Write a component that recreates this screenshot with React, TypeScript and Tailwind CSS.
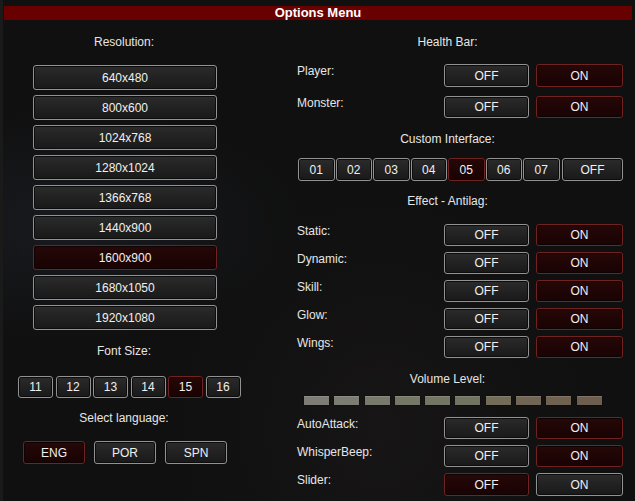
const resolutions = [
  "640x480",
  "800x600",
  "1024x768",
  "1280x1024",
  "1366x768",
  "1440x900",
  "1600x900",
  "1680x1050",
  "1920x1080",
];

const fontSizes = ["11", "12", "13", "14", "15", "16"];
const interfaces = ["01", "02", "03", "04", "05", "06", "07"];

const volumeColors = [
  "bg-[#7d7d76]",
  "bg-[#7b7c72]",
  "bg-[#787a6c]",
  "bg-[#757866]",
  "bg-[#737662]",
  "bg-[#717460]",
  "bg-[#736c59]",
  "bg-[#716655]",
  "bg-[#706251]",
  "bg-[#6e5e4f]",
];

const dark =
  "border border-[#929292] rounded-[3px] bg-linear-to-b from-[#2b2b2b] to-[#191919] shadow-[inset_0_0_0_1px_#0c0c0c]";
const red =
  "border border-[#732222] rounded-[3px] bg-linear-to-b from-[#260808] to-[#190303] shadow-[inset_0_0_0_1px_#100202]";

const Btn = ({
  label,
  active,
  className,
}: {
  label: string;
  active?: boolean;
  className: string;
}) => (
  <div
    className={`${active ? red : dark} ${className} flex items-center justify-center text-[#f0f0f0] leading-none`}
  >
    {label}
  </div>
);

const Label = ({ text, className }: { text: string; className: string }) => (
  <div className={`h-[14px] leading-[14px] text-center ${className}`}>{text}</div>
);

const ToggleRow = ({
  label,
  on,
  className,
}: {
  label: string;
  on: boolean;
  className: string;
}) => (
  <div className={`flex items-start ${className}`}>
    <div className="ml-[25px] w-[147px] leading-[14px]">{label}</div>
    <Btn label="OFF" active={!on} className="w-[85px] h-full" />
    <Btn label="ON" active={on} className="ml-[7px] w-[87px] h-full" />
  </div>
);

export default function App() {
  return (
    <div className="w-[635px] h-[501px] overflow-hidden bg-[#101010] bg-[radial-gradient(ellipse_at_10%_45%,#181a1f_0%,transparent_30%),radial-gradient(ellipse_at_60%_85%,#171515_0%,transparent_40%)] pt-[6px] font-['Liberation_Sans',Arial,sans-serif] text-[12px] text-[#e6e6e6] border-l-[3px] border-[#1a1a1a]">
      <div className="ml-[1px] mr-[3px] h-[14px] bg-[#690000] flex items-center justify-center font-bold text-[13px] text-white">
        Options Menu
      </div>

      <div className="flex">
        {/* left column */}
        <div className="w-[247px] flex flex-col">
          <Label text="Resolution:" className="mt-[15px] w-[242px]" />
          <div className="mt-[16px] ml-[30px] flex flex-col gap-[5px]">
            {resolutions.map((r) => (
              <Btn key={r} label={r} active={r === "1600x900"} className="w-[184px] h-[25px]" />
            ))}
          </div>

          <Label text="Font Size:" className="mt-[14px] w-[242px]" />
          <div className="mt-[18px] ml-[15px] flex gap-[2.5px]">
            {fontSizes.map((f) => (
              <Btn key={f} label={f} active={f === "15"} className="w-[35px] h-[22px]" />
            ))}
          </div>

          <Label text="Select language:" className="mt-[13px] w-[242px]" />
          <div className="mt-[16px] ml-[20px] flex gap-[9px]">
            <Btn label="ENG" active className="w-[62px] h-[23px]" />
            <Btn label="POR" className="w-[62px] h-[23px]" />
            <Btn label="SPN" className="w-[62px] h-[23px]" />
          </div>
        </div>

        {/* right column */}
        <div className="ml-[22px] w-[351px] flex flex-col">
          <Label text="Health Bar:" className="mt-[15px]" />
          <ToggleRow label="Player:" on className="mt-[15px] h-[23px]" />
          <ToggleRow label="Monster:" on className="mt-[9px] h-[22px]" />

          <Label text="Custom Interface:" className="mt-[14px]" />
          <div className="mt-[12px] ml-[26px] flex">
            <div className="flex gap-[1px]">
              {interfaces.map((i) => (
                <Btn key={i} label={i} active={i === "05"} className="w-[36.5px] h-[23px]" />
              ))}
            </div>
            <Btn label="OFF" className="ml-[2.5px] w-[61px] h-[23px]" />
          </div>

          <Label text="Effect - Antilag:" className="mt-[13px]" />
          <div className="mt-[16px] flex flex-col gap-[6px]">
            {["Static:", "Dynamic:", "Skill:", "Glow:", "Wings:"].map((l) => (
              <ToggleRow key={l} label={l} on className="h-[22px]" />
            ))}
          </div>

          <Label text="Volume Level:" className="mt-[14px]" />
          <div className="mt-[10px] ml-[32px] flex gap-[5.3px]">
            {volumeColors.map((c, i) => (
              <div
                key={i}
                className={`${c} w-[25px] h-[9px] border-t border-[#ffffff22] shadow-[0_0_1px_#000]`}
              />
            ))}
          </div>

          <div className="mt-[12px] flex flex-col gap-[6px]">
            <ToggleRow label="AutoAttack:" on className="h-[22px]" />
            <ToggleRow label="WhisperBeep:" on className="h-[22px]" />
            <ToggleRow label="Slider:" on={false} className="h-[23px]" />
          </div>
        </div>
      </div>
    </div>
  );
}
